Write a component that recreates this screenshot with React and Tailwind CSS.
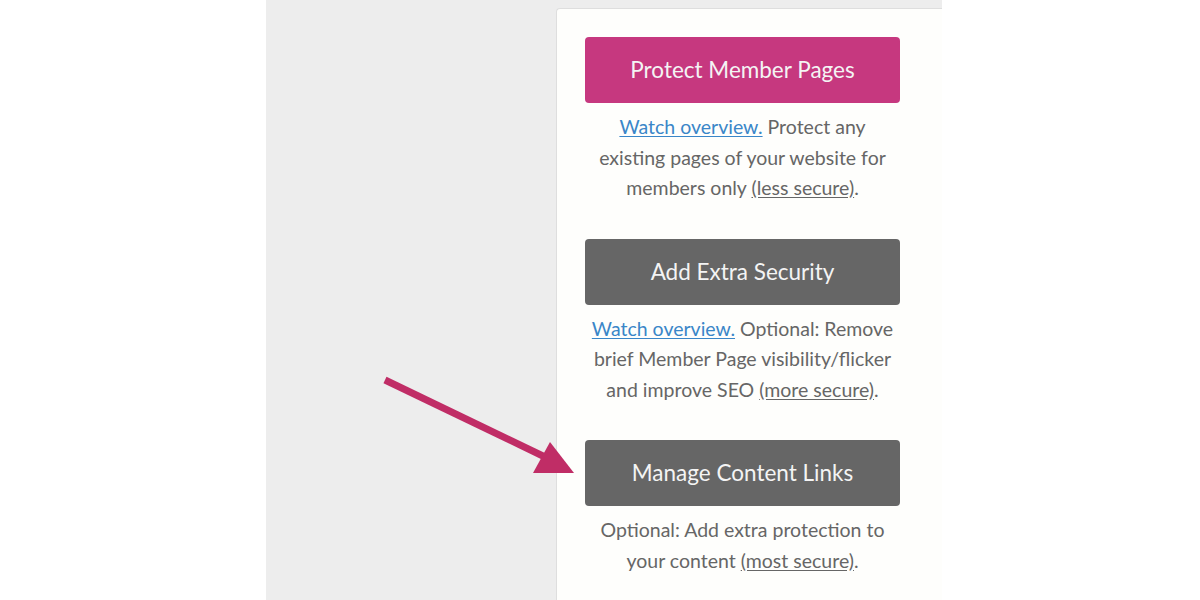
export default function App() {
  const font = { fontFamily: "Lato, 'Open Sans', sans-serif" }
  return (
    <div className="relative w-[1200px] h-[600px] bg-white overflow-hidden" style={font}>
      <div className="ml-[266px] w-[676px] h-[600px] bg-[#ededed] pt-2 pl-[290px]">
        <div className="h-[592px] bg-[#fefefc] border-l border-t border-[#dedede] rounded-tl-[4px] pl-[28px] pt-[28px]">
          <Section color="bg-[#c6387f]" label="Protect Member Pages">
            <a className="text-[#3a86c8] underline underline-offset-2">Watch overview.</a> Protect any existing pages of your website for members only{" "}
            <span className="underline underline-offset-2">(less secure)</span>.
          </Section>
          <Section color="bg-[#666666]" label="Add Extra Security">
            <a className="text-[#3a86c8] underline underline-offset-2">Watch overview.</a> Optional: Remove brief Member Page visibility/flicker and improve SEO{" "}
            <span className="underline underline-offset-2">(more secure)</span>.
          </Section>
          <Section color="bg-[#666666]" label="Manage Content Links">
            Optional: Add extra protection to your content{" "}
            <span className="underline underline-offset-2">(most secure)</span>.
          </Section>
        </div>
      </div>
      <svg className="absolute left-0 top-0" width="1200" height="600">
        <line x1="385" y1="380" x2="545" y2="457" stroke="#c02d66" strokeWidth="7" />
        <polygon points="533,473 550,442 574,473" fill="#c02d66" />
      </svg>
    </div>
  )
}

function Section({ color, label, children }) {
  return (
    <div className="w-[315px] mb-[35px]">
      <button className={`${color} w-full h-[66px] rounded-[4px] text-[#f4f4f4] text-[22.5px]`}>{label}</button>
      <p className="mt-[9px] px-[5px] text-center text-[19.5px] leading-[30.5px] text-[#666]">{children}</p>
    </div>
  )
}
